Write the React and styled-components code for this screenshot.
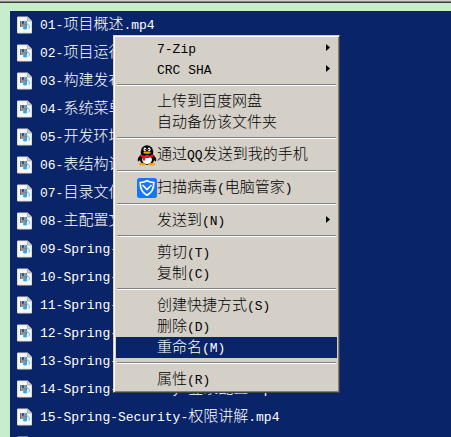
import React from "react";
import styled, { createGlobalStyle } from "styled-components";

const GlobalStyle = createGlobalStyle`
  body {
    margin: 0;
    overflow: hidden;
    font-family: "Liberation Mono", "Noto Sans CJK SC", monospace;
    font-size: 15px;
    font-weight: 300;
  }
`;

const Page = styled.main`
  position: relative;
  box-sizing: border-box;
  height: 100vh;
  overflow: hidden;
  display: flex;
  flex-direction: column;
  background: #c7edcc;
`;

const WindowEdge = styled.div`
  flex: none;
  height: 1px;
  background: #d4d0c8;
  border-bottom: 1px solid #808080;
  box-shadow: 0 1px 0 #404040;
`;

const FileList = styled.ul`
  flex: 1;
  margin: 9px 0 0 10px;
  padding: 0;
  list-style: none;
  overflow: hidden;
  background: #0a246a;
  color: #fff;
`;

const FileRow = styled.li`
  display: flex;
  align-items: center;
  gap: 8px;
  height: 28px;
  padding-left: 7px;
  line-height: 20px;
  white-space: nowrap;

  svg {
    flex: none;
  }
`;

const Text = styled.span`
  padding-top: 2px;
`;

const Latin = styled.span`
  font-size: 13px;
`;

const Menu = styled.div`
  position: absolute;
  left: 113px;
  top: 35px;
  box-sizing: border-box;
  min-width: 227px;
  padding: 1px;
  background: #d4d0c8;
  border: 1px solid;
  border-color: #d4d0c8 #404040 #404040 #d4d0c8;
  box-shadow: inset 1px 1px 0 #fff, inset -1px -1px 0 #808080;
`;

const MenuBody = styled.div`
  padding: 1px;
`;

const MenuItem = styled.button`
  display: grid;
  grid-template-columns: 20px 1fr 4px;
  align-items: center;
  width: 100%;
  height: ${(p) => (p.$tall ? 22 : 21)}px;
  padding: 0 7px 0 21px;
  border: 0;
  background: ${(p) => (p.$active ? "#0a246a" : "transparent")};
  color: ${(p) => (p.$active ? "#fff" : "#000")};
  font-family: inherit;
  font-size: 15px;
  font-weight: inherit;
  line-height: 20px;
  text-align: left;
  white-space: nowrap;
`;

const Separator = styled.hr`
  height: 1px;
  margin: 4px 1px 5px;
  border: 0;
  border-top: 1px solid #808080;
  background: #fff;
`;

const Arrow = styled.svg`
  display: block;
  margin-bottom: 3px;
`;

function Label({ text }) {
  return (
    <Text>
      {text.split(/([\x20-\x7e]+)/).map((run, i) =>
        i % 2 ? <Latin key={i}>{run}</Latin> : run
      )}
    </Text>
  );
}

function VideoFileIcon() {
  return (
    <svg width="15" height="18" viewBox="0 0 15 18" aria-hidden="true">
      <path d="M.5 1h10L14.500 5v12H.5z" fill="#f8f8f6" stroke="#dcdcd8" />
      <path d="M10.500.5v4.500h4z" fill="#d4d8da" stroke="#8b949c" strokeWidth=".6" />
      <path d="M3 5h7v6H3z" fill="#86a4b8" />
      <path d="M3 5h1v6H3zM9 5h1v6H9z" fill="#68727c" />
      <path d="M5 5h2v3H5z" fill="#45586a" />
      <path d="M5 8h3v2H5z" fill="#a58480" />
      <path d="M9 6c.3 2 3.500 2.500 3.500 4.500 0 1-.4 1.500-1 2" fill="none" stroke="#7fcaee" strokeWidth="1.300" />
      <path d="M9 6v6" stroke="#3b95cd" strokeWidth="1.200" />
      <ellipse cx="8" cy="12" rx="2.100" ry="1.600" fill="#35a7e6" />
    </svg>
  );
}

function PenguinIcon() {
  return (
    <svg width="20" height="21" viewBox="0 0 20 21" aria-hidden="true">
      <path d="M4.500 9C1.800 11 .2 14 .8 16c.4.900 1.600-.1 2.400-1.200L5 18h10l1.800-3.200c.8 1.100 2 2.100 2.400 1.200.6-2-1-5-3.700-7z" fill="#050505" />
      <ellipse cx="10" cy="7" rx="6.300" ry="6.800" fill="#050505" />
      <ellipse cx="10" cy="14.500" rx="7.300" ry="5.200" fill="#050505" />
      <ellipse cx="10" cy="14.700" rx="4.900" ry="4.200" fill="#fff" />
      <ellipse cx="5.200" cy="19.300" rx="3.500" ry="1.300" fill="#f5a500" />
      <ellipse cx="14.800" cy="19.300" rx="3.500" ry="1.300" fill="#f5a500" />
      <ellipse cx="7.900" cy="4.500" rx="1.400" ry="1.900" fill="#fff" />
      <ellipse cx="12.100" cy="4.500" rx="1.400" ry="1.900" fill="#fff" />
      <circle cx="8.300" cy="4.800" r=".7" />
      <circle cx="11.700" cy="4.800" r=".7" />
      <ellipse cx="10" cy="7.700" rx="3.600" ry="1.100" fill="#f5a500" />
      <path d="M3.700 9.200c3.700 2 8.900 2 12.600 0l.7 2c-2.600 1.500-5.800 2-8.700 1.700V15.500H5.800v-3.300L3 11.200z" fill="#e31b23" />
    </svg>
  );
}

function ShieldIcon() {
  return (
    <svg width="20" height="20" viewBox="0 0 20 20" aria-hidden="true">
      <rect width="20" height="20" rx="2.500" fill="#1677f5" />
      <path
        d="M10 2.800c2 1.200 4.200 1.700 6.800 1.700.2 6-1.800 10-6.800 12.700C5 14.500 3 10.500 3.200 4.500 5.800 4.500 8 4 10 2.800z"
        fill="none"
        stroke="#fff"
        strokeWidth="1.600"
      />
      <path d="M5.500 7 10 11.500 14.500 7" fill="none" stroke="#fff" strokeWidth="1.600" />
    </svg>
  );
}

function SubmenuArrow() {
  return (
    <Arrow width="4" height="7" viewBox="0 0 4 7" aria-hidden="true">
      <path d="M0 0v7l4-3.500z" fill="currentColor" />
    </Arrow>
  );
}

const files = [
  "01-项目概述.mp4",
  "02-项目运行.mp4",
  "03-构建发布.mp4",
  "04-系统菜单.mp4",
  "05-开发环境.mp4",
  "06-表结构讲解.mp4",
  "07-目录文件.mp4",
  "08-主配置文件.mp4",
  "09-Spring-IOC.mp4",
  "10-Spring-AOP.mp4",
  "11-Spring-MVC.mp4",
  "12-Spring-Boot.mp4",
  "13-Spring-Data.mp4",
  "14-Spring-Security-登录配置.mp4",
  "15-Spring-Security-权限讲解.mp4",
  "16-Spring-Security.mp4",
];

const groups = [
  [
    { text: "7-Zip", submenu: true },
    { text: "CRC SHA", submenu: true },
  ],
  [{ text: "上传到百度网盘" }, { text: "自动备份该文件夹" }],
  [{ text: "通过QQ发送到我的手机", icon: <PenguinIcon /> }],
  [{ text: "扫描病毒(电脑管家)", icon: <ShieldIcon /> }],
  [{ text: "发送到(N)", submenu: true }],
  [{ text: "剪切(T)" }, { text: "复制(C)" }],
  [
    { text: "创建快捷方式(S)" },
    { text: "删除(D)" },
    { text: "重命名(M)", active: true },
  ],
  [{ text: "属性(R)" }],
];

export default function App() {
  return (
    <Page>
      <GlobalStyle />
      <WindowEdge />
      <FileList>
        {files.map((name) => (
          <FileRow key={name}>
            <VideoFileIcon />
            <Label text={name} />
          </FileRow>
        ))}
      </FileList>
      <Menu>
        <MenuBody role="menu">
          {groups.map((items, g) => (
            <React.Fragment key={g}>
              {g > 0 && <Separator />}
              {items.map((item) => (
                <MenuItem
                  key={item.text}
                  type="button"
                  role="menuitem"
                  aria-haspopup={item.submenu ? "menu" : undefined}
                  $tall={Boolean(item.icon)}
                  $active={item.active}
                >
                  {item.icon || <span />}
                  <Label text={item.text} />
                  {item.submenu && <SubmenuArrow />}
                </MenuItem>
              ))}
            </React.Fragment>
          ))}
        </MenuBody>
      </Menu>
    </Page>
  );
}
